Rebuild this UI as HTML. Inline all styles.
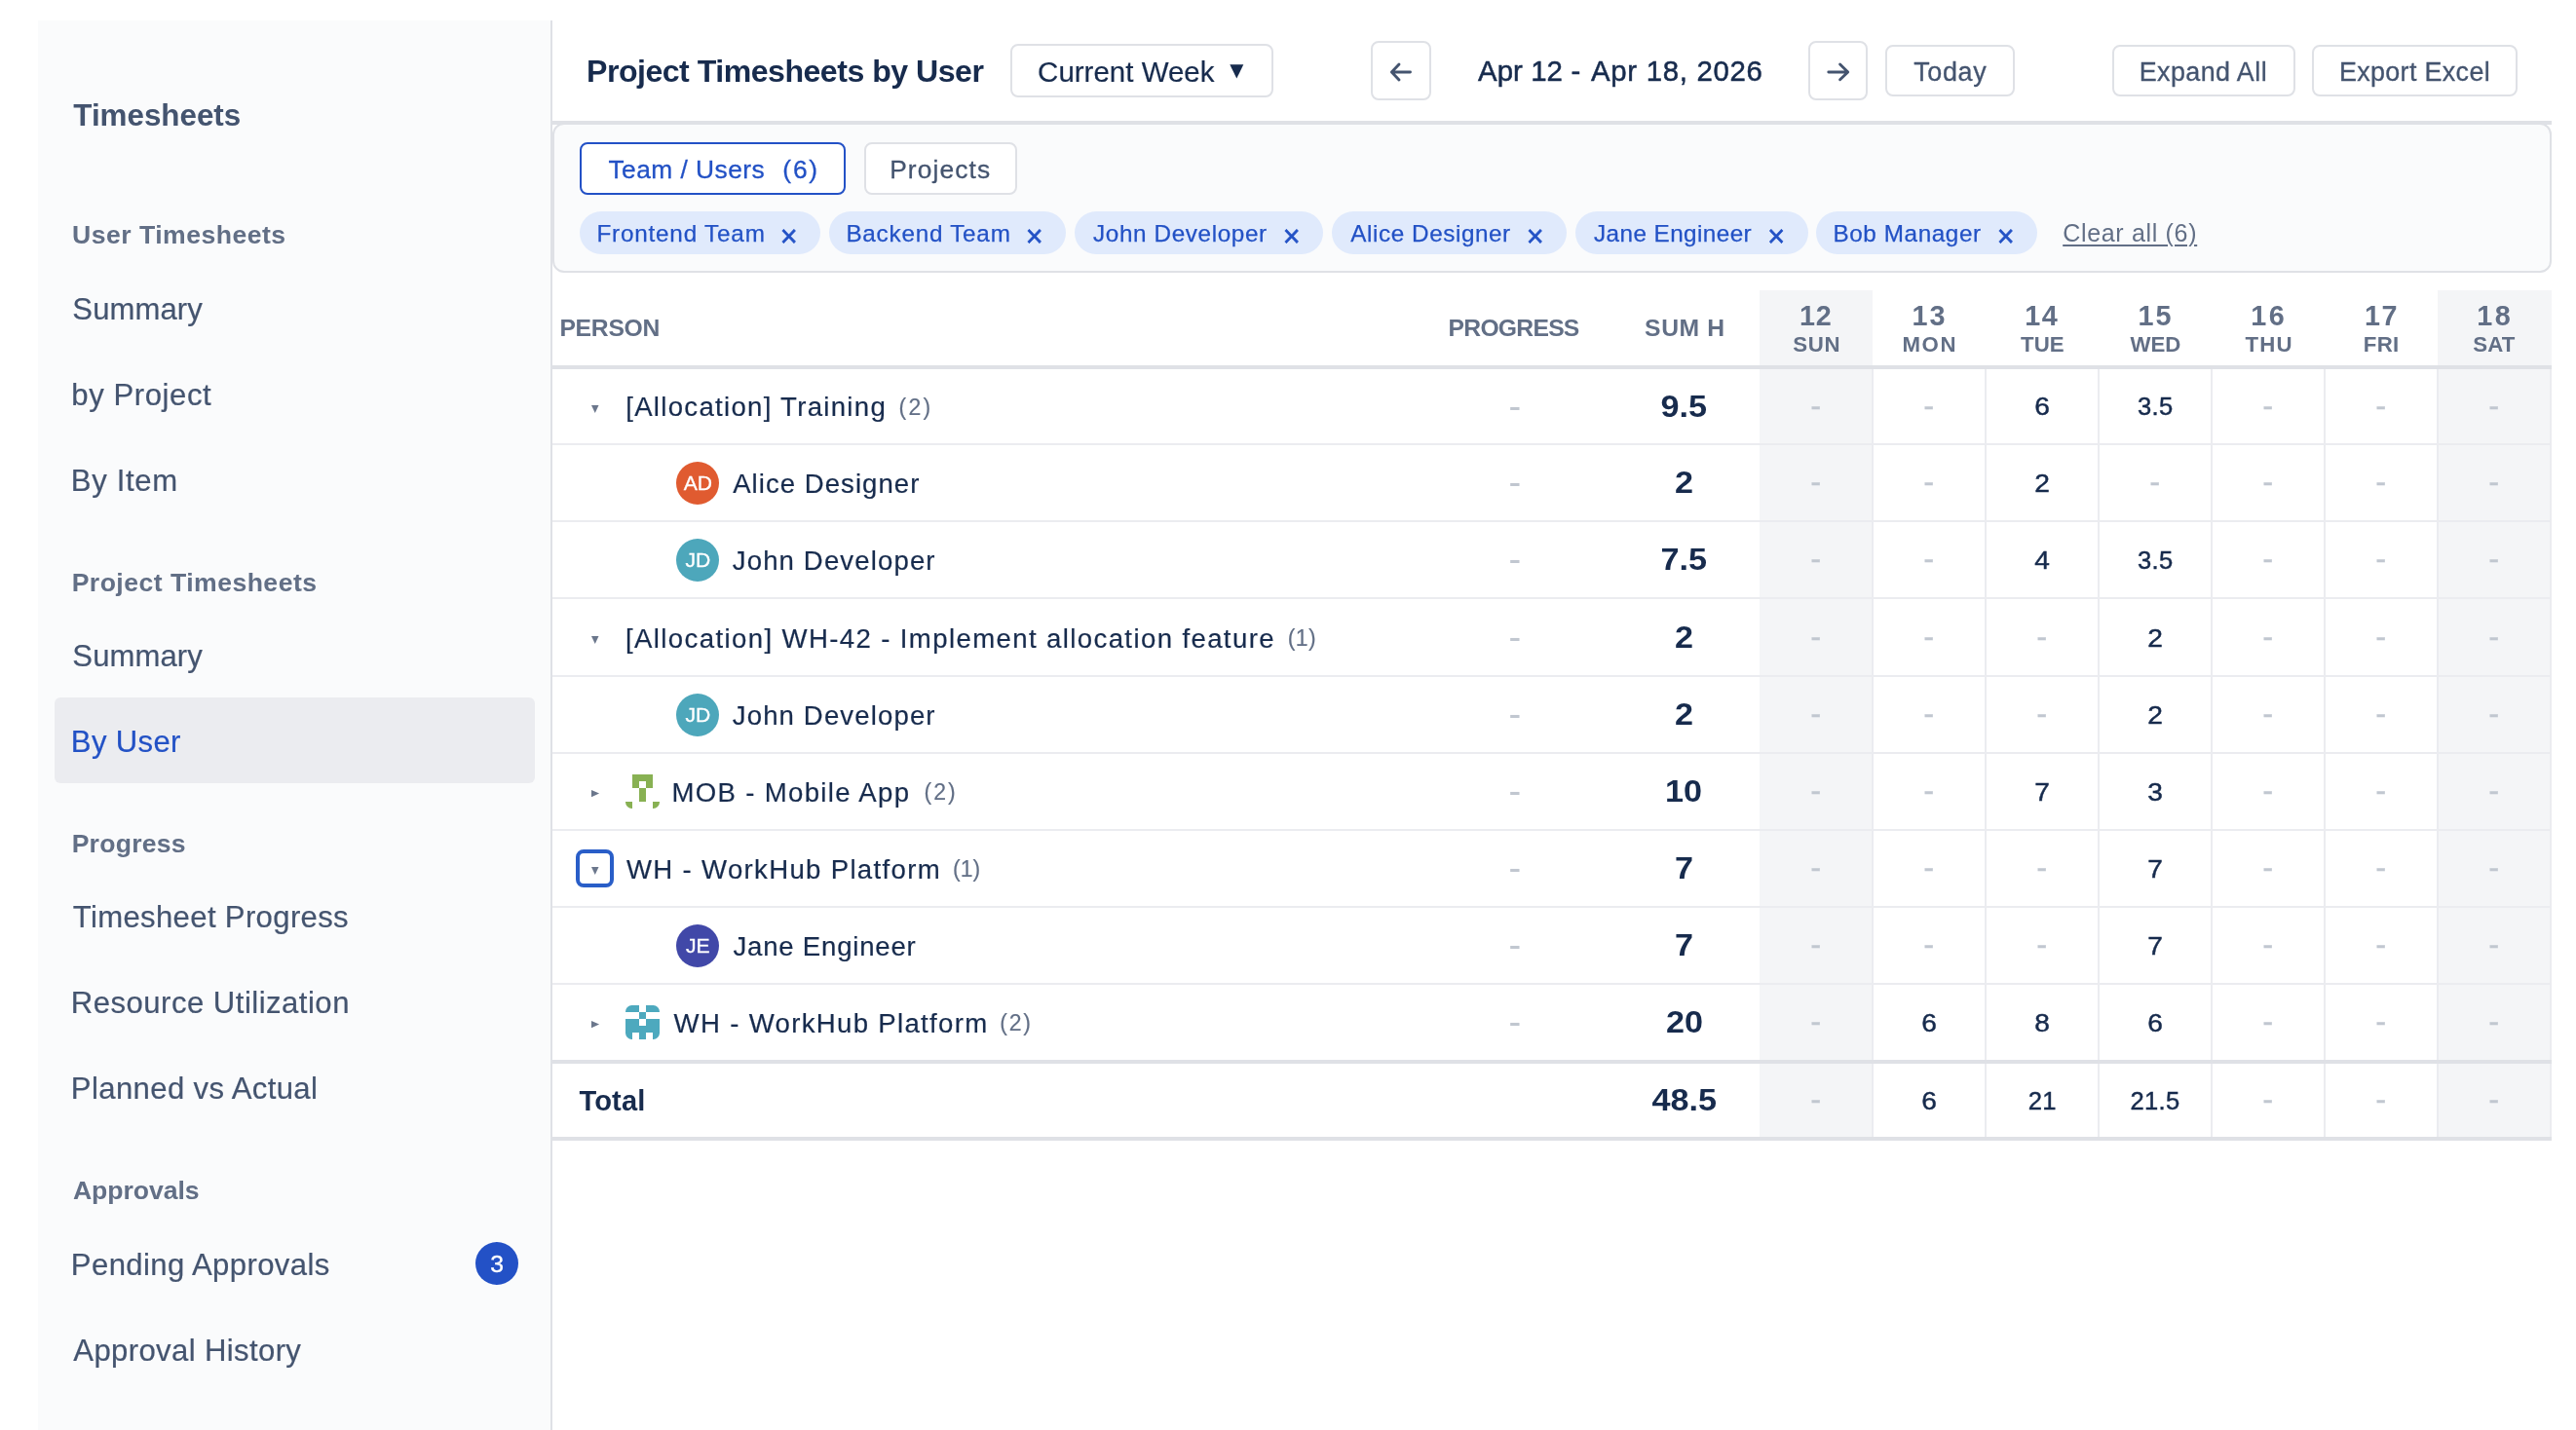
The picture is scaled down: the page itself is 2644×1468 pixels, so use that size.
<!DOCTYPE html>
<html lang="en"><head><meta charset="utf-8"><title>Project Timesheets by User</title>
<style>
*{box-sizing:border-box;margin:0;padding:0}
html,body{width:2644px;height:1468px;background:#fff;overflow:hidden}
body{position:relative;font-family:"Liberation Sans", sans-serif;}
.t{position:absolute;white-space:nowrap;line-height:1;font-family:"Liberation Sans", sans-serif;}
#txt{position:absolute;left:0;top:0;width:2644px;height:1468px;will-change:transform}
.b{position:absolute;}
.btn{position:absolute;border:2px solid #DFE1E6;border-radius:8px;background:#fff;}
.chip{position:absolute;top:217px;height:44px;border-radius:22px;background:#E0EAFC;}
.hl{position:absolute;left:567px;width:2052px;height:2px;background:#EBECF0;}
.vl{position:absolute;top:379px;width:2px;height:790px;background:#EBECF0;}
.av{position:absolute;width:44px;height:44px;border-radius:50%;}
svg{position:absolute;overflow:visible}
</style></head>
<body>
<div class="b" style="left:39px;top:21px;width:528px;height:1447px;background:#FAFBFC;border-right:2px solid #DFE1E6"></div>
<div class="b" style="left:56px;top:716px;width:493px;height:88px;border-radius:6px;background:#EBECF0"></div>
<div class="b" style="left:488px;top:1275px;width:44px;height:44px;border-radius:50%;background:#2351C6"></div>
<div class="b" style="left:567px;top:124px;width:2052px;height:4px;background:#DFE1E6"></div>
<div class="b" style="left:567px;top:126px;width:2052px;height:154px;border:2px solid #DFE1E6;border-radius:12px;background:#FAFBFC"></div>
<div class="btn" style="left:1037px;top:45px;width:270px;height:55px"></div>
<div class="btn" style="left:1407px;top:42px;width:62px;height:61px"></div>
<div class="btn" style="left:1856px;top:42px;width:61px;height:61px"></div>
<div class="btn" style="left:1935px;top:46px;width:133px;height:53px"></div>
<div class="btn" style="left:2168px;top:46px;width:188px;height:53px"></div>
<div class="btn" style="left:2373px;top:46px;width:211px;height:53px"></div>
<svg style="left:1262px;top:66px" width="15" height="15" viewBox="0 0 15 15"><path d="M0.3 0.3 H14.3 L7.3 14.6 Z" fill="#172B4D"/></svg>
<svg style="left:1426px;top:64px" width="24" height="20" viewBox="0 0 24 20" fill="none" stroke="#44546F" stroke-width="2.9" stroke-linecap="round" stroke-linejoin="round"><path d="M21.5 10 H2.6 M10 2 L2.4 10 L10 18"/></svg>
<svg style="left:1875px;top:64px" width="24" height="20" viewBox="0 0 24 20" fill="none" stroke="#44546F" stroke-width="2.9" stroke-linecap="round" stroke-linejoin="round"><path d="M1.8 10 H21.6 M13.6 2 L21.7 10 L13.6 17.8"/></svg>
<div class="btn" style="left:595px;top:146px;width:273px;height:54px;border-color:#2351C6"></div>
<div class="btn" style="left:887px;top:146px;width:157px;height:54px"></div>
<div class="chip" style="left:595px;width:247px"></div>
<div class="chip" style="left:851px;width:243px"></div>
<div class="chip" style="left:1103px;width:255px"></div>
<div class="chip" style="left:1367px;width:241px"></div>
<div class="chip" style="left:1617px;width:238.5px"></div>
<div class="chip" style="left:1864px;width:227px"></div>
<div class="b" style="left:1806px;top:298px;width:116px;height:871px;background:#F4F5F7"></div>
<div class="b" style="left:2502px;top:298px;width:117px;height:871px;background:#F4F5F7"></div>
<div class="vl" style="left:1921px"></div>
<div class="vl" style="left:2037px"></div>
<div class="vl" style="left:2153px"></div>
<div class="vl" style="left:2269px"></div>
<div class="vl" style="left:2385px"></div>
<div class="vl" style="left:2501px"></div>
<div class="vl" style="left:2617px"></div>
<div class="b" style="left:567px;top:375px;width:2052px;height:4px;background:#DFE1E6"></div>
<div class="hl" style="top:455px"></div>
<div class="hl" style="top:534px"></div>
<div class="hl" style="top:613px"></div>
<div class="hl" style="top:693px"></div>
<div class="hl" style="top:772px"></div>
<div class="hl" style="top:851px"></div>
<div class="hl" style="top:930px"></div>
<div class="hl" style="top:1009px"></div>
<div class="b" style="left:567px;top:1088px;width:2052px;height:4px;background:#DFE1E6"></div>
<div class="b" style="left:567px;top:1167px;width:2052px;height:4px;background:#DFE1E6"></div>
<div class="b" style="left:591px;top:872px;width:39px;height:39px;border:4px solid #295EC8;border-radius:8px;background:#fff"></div>
<svg style="left:607.05px;top:416.0px" width="8" height="8" viewBox="0 0 8 8"><path d="M0 0 H7.5 L3.75 7.9 Z" fill="#6B778C"/></svg>
<svg style="left:607.05px;top:653.0px" width="8" height="8" viewBox="0 0 8 8"><path d="M0 0 H7.5 L3.75 7.9 Z" fill="#6B778C"/></svg>
<svg style="left:607.05px;top:890.3000000000001px" width="8" height="8" viewBox="0 0 8 8"><path d="M0 0 H7.5 L3.75 7.9 Z" fill="#6B778C"/></svg>
<svg style="left:607px;top:810.8px" width="9" height="8" viewBox="0 0 9 8"><path d="M0 0 L8.1 3.6 L0 7.2 Z" fill="#6B778C"/></svg>
<svg style="left:607px;top:1047.9px" width="9" height="8" viewBox="0 0 9 8"><path d="M0 0 L8.1 3.6 L0 7.2 Z" fill="#6B778C"/></svg>
<div class="av" style="left:694px;top:474.0px;background:#E05B30"></div>
<div class="av" style="left:694px;top:553.0px;background:#4DA7BB"></div>
<div class="av" style="left:694px;top:712.0px;background:#4DA7BB"></div>
<div class="av" style="left:694px;top:949.0px;background:#4148A8"></div>
<svg style="left:642px;top:795px" width="35" height="35" viewBox="0 0 35 35"><defs><clipPath id="c642795"><rect width="35" height="35" rx="6.5"/></clipPath></defs><g clip-path="url(#c642795)" fill="#88B153" shape-rendering="crispEdges"><rect x="7" y="0" width="7" height="7"/><rect x="14" y="0" width="7" height="7"/><rect x="21" y="0" width="7" height="7"/><rect x="7" y="7" width="7" height="7"/><rect x="21" y="7" width="7" height="7"/><rect x="14" y="14" width="7" height="7"/><rect x="14" y="21" width="7" height="7"/><rect x="0" y="28" width="7" height="7"/><rect x="28" y="28" width="7" height="7"/></g></svg>
<svg style="left:642px;top:1032px" width="35" height="35" viewBox="0 0 35 35"><defs><clipPath id="c6421032"><rect width="35" height="35" rx="6.5"/></clipPath></defs><g clip-path="url(#c6421032)" fill="#4DA9BE" shape-rendering="crispEdges"><rect x="0" y="0" width="7" height="7"/><rect x="7" y="0" width="7" height="7"/><rect x="21" y="0" width="7" height="7"/><rect x="28" y="0" width="7" height="7"/><rect x="14" y="7" width="7" height="7"/><rect x="0" y="14" width="7" height="7"/><rect x="7" y="14" width="7" height="7"/><rect x="21" y="14" width="7" height="7"/><rect x="28" y="14" width="7" height="7"/><rect x="0" y="21" width="7" height="7"/><rect x="7" y="21" width="7" height="7"/><rect x="14" y="21" width="7" height="7"/><rect x="21" y="21" width="7" height="7"/><rect x="28" y="21" width="7" height="7"/><rect x="0" y="28" width="7" height="7"/><rect x="14" y="28" width="7" height="7"/><rect x="28" y="28" width="7" height="7"/></g></svg>
<div id="txt">
<nav class="sidebar">
<span class="t" style="left:75.30px;top:103px;font-size:31.4px;color:#44546F;font-weight:700;letter-spacing:-0.026px;">Timesheets</span>
<span class="t" style="left:74.05px;top:228px;font-size:26.6px;color:#626F86;font-weight:700;letter-spacing:0.472px;">User Timesheets</span>
<span class="t" style="left:73.64px;top:585px;font-size:26.6px;color:#626F86;font-weight:700;letter-spacing:0.470px;">Project Timesheets</span>
<span class="t" style="left:73.64px;top:853px;font-size:26.6px;color:#626F86;font-weight:700;letter-spacing:0.245px;">Progress</span>
<span class="t" style="left:74.88px;top:1209px;font-size:26.6px;color:#626F86;font-weight:700;letter-spacing:-0.035px;">Approvals</span>
<span class="t" style="left:74.33px;top:302px;font-size:31.08px;color:#44546F;letter-spacing:0.084px;-webkit-text-stroke:0.2px #44546F;">Summary</span>
<span class="t" style="left:73.36px;top:390px;font-size:31.08px;color:#44546F;letter-spacing:0.572px;-webkit-text-stroke:0.2px #44546F;">by Project</span>
<span class="t" style="left:72.87px;top:478px;font-size:31.08px;color:#44546F;letter-spacing:0.648px;-webkit-text-stroke:0.2px #44546F;">By Item</span>
<span class="t" style="left:74.33px;top:658px;font-size:31.08px;color:#44546F;letter-spacing:0.084px;-webkit-text-stroke:0.2px #44546F;">Summary</span>
<span class="t" style="left:72.87px;top:746px;font-size:31.08px;color:#2251C5;letter-spacing:0.343px;-webkit-text-stroke:0.2px #2251C5;">By User</span>
<span class="t" style="left:74.81px;top:926px;font-size:31.08px;color:#44546F;letter-spacing:0.348px;-webkit-text-stroke:0.2px #44546F;">Timesheet Progress</span>
<span class="t" style="left:72.87px;top:1014px;font-size:31.08px;color:#44546F;letter-spacing:0.484px;-webkit-text-stroke:0.2px #44546F;">Resource Utilization</span>
<span class="t" style="left:72.87px;top:1102px;font-size:31.08px;color:#44546F;letter-spacing:0.375px;-webkit-text-stroke:0.2px #44546F;">Planned vs Actual</span>
<span class="t" style="left:72.87px;top:1283px;font-size:31.08px;color:#44546F;letter-spacing:0.388px;-webkit-text-stroke:0.2px #44546F;">Pending Approvals</span>
<span class="t" style="left:75.30px;top:1371px;font-size:31.08px;color:#44546F;letter-spacing:0.374px;-webkit-text-stroke:0.2px #44546F;">Approval History</span>
<span class="t" style="left:503.20px;top:1286px;font-size:24.74px;color:#FFFFFF;-webkit-text-stroke:0.3px #FFFFFF;">3</span>
</nav>
<header class="toolbar">
<span class="t" style="left:601.99px;top:57px;font-size:32.12px;color:#172B4D;font-weight:700;letter-spacing:-0.507px;">Project Timesheets by User</span>
<span class="t" style="left:1065.12px;top:59px;font-size:29.48px;color:#172B4D;letter-spacing:0.010px;-webkit-text-stroke:0.2px #172B4D;">Current Week</span>
<span class="t" style="left:1517.00px;top:58px;font-size:29.36px;color:#172B4D;letter-spacing:0.077px;-webkit-text-stroke:0.5px #172B4D;">Apr 12</span>
<span class="t" style="left:1612.48px;top:58px;font-size:29.36px;color:#172B4D;-webkit-text-stroke:0.5px #172B4D;">-</span>
<span class="t" style="left:1633.00px;top:58px;font-size:29.36px;color:#172B4D;letter-spacing:0.696px;-webkit-text-stroke:0.5px #172B4D;">Apr 18, 2026</span>
<span class="t" style="left:1964.28px;top:61px;font-size:26.92px;color:#44546F;letter-spacing:0.646px;-webkit-text-stroke:0.3px #44546F;">Today</span>
<span class="t" style="left:2195.70px;top:61px;font-size:26.92px;color:#44546F;letter-spacing:0.420px;-webkit-text-stroke:0.3px #44546F;">Expand All</span>
<span class="t" style="left:2400.90px;top:61px;font-size:26.92px;color:#44546F;letter-spacing:0.343px;-webkit-text-stroke:0.3px #44546F;">Export Excel</span>
</header>
<section class="filters">
<span class="t" style="left:624.39px;top:161px;font-size:26.34px;color:#2251C5;letter-spacing:0.481px;-webkit-text-stroke:0.3px #2251C5;">Team / Users</span>
<span class="t" style="left:803.37px;top:161px;font-size:26.34px;color:#2251C5;letter-spacing:1.753px;-webkit-text-stroke:0.3px #2251C5;">(6)</span>
<span class="t" style="left:913.14px;top:161px;font-size:26.34px;color:#44546F;letter-spacing:1.133px;-webkit-text-stroke:0.3px #44546F;">Projects</span>
<span class="t" style="left:612.40px;top:228px;font-size:24.27px;color:#2251C5;letter-spacing:0.808px;-webkit-text-stroke:0.25px #2251C5;">Frontend Team</span>
<span class="t" style="left:800.68px;top:227px;font-size:30.5px;color:#2251C5;-webkit-text-stroke:0.6px #2251C5;">×</span>
<span class="t" style="left:868.40px;top:228px;font-size:24.27px;color:#2251C5;letter-spacing:0.762px;-webkit-text-stroke:0.25px #2251C5;">Backend Team</span>
<span class="t" style="left:1052.68px;top:227px;font-size:30.5px;color:#2251C5;-webkit-text-stroke:0.6px #2251C5;">×</span>
<span class="t" style="left:1122.00px;top:228px;font-size:24.27px;color:#2251C5;letter-spacing:0.630px;-webkit-text-stroke:0.25px #2251C5;">John Developer</span>
<span class="t" style="left:1316.68px;top:227px;font-size:30.5px;color:#2251C5;-webkit-text-stroke:0.6px #2251C5;">×</span>
<span class="t" style="left:1386.30px;top:228px;font-size:24.27px;color:#2251C5;letter-spacing:0.570px;-webkit-text-stroke:0.25px #2251C5;">Alice Designer</span>
<span class="t" style="left:1566.68px;top:227px;font-size:30.5px;color:#2251C5;-webkit-text-stroke:0.6px #2251C5;">×</span>
<span class="t" style="left:1636.00px;top:228px;font-size:24.27px;color:#2251C5;letter-spacing:0.431px;-webkit-text-stroke:0.25px #2251C5;">Jane Engineer</span>
<span class="t" style="left:1814.18px;top:227px;font-size:30.5px;color:#2251C5;-webkit-text-stroke:0.6px #2251C5;">×</span>
<span class="t" style="left:1881.40px;top:228px;font-size:24.27px;color:#2251C5;letter-spacing:0.607px;-webkit-text-stroke:0.25px #2251C5;">Bob Manager</span>
<span class="t" style="left:2049.68px;top:227px;font-size:30.5px;color:#2251C5;-webkit-text-stroke:0.6px #2251C5;">×</span>
<span class="t" style="left:2117.20px;top:227px;font-size:25.0px;color:#626F86;letter-spacing:0.677px;text-decoration:underline;text-decoration-thickness:2px;text-underline-offset:3px;">Clear all (6)</span>
</section>
<div class="table-head">
<span class="t" style="left:574.40px;top:325px;font-size:24.71px;color:#626F86;font-weight:700;letter-spacing:-0.261px;">PERSON</span>
<span class="t" style="left:1486.60px;top:325px;font-size:24.71px;color:#626F86;font-weight:700;letter-spacing:-0.753px;">PROGRESS</span>
<span class="t" style="left:1688.10px;top:325px;font-size:24.71px;color:#626F86;font-weight:700;letter-spacing:0.582px;">SUM H</span>
<span class="t" style="left:1847.10px;top:310px;font-size:28.78px;color:#626F86;font-weight:700;letter-spacing:0.704px;">12</span>
<span class="t" style="left:1840.30px;top:343px;font-size:22.24px;color:#626F86;font-weight:700;letter-spacing:0.653px;">SUN</span>
<span class="t" style="left:1962.50px;top:310px;font-size:28.78px;color:#626F86;font-weight:700;letter-spacing:1.904px;">13</span>
<span class="t" style="left:1952.40px;top:343px;font-size:22.24px;color:#626F86;font-weight:700;letter-spacing:1.688px;">MON</span>
<span class="t" style="left:2078.35px;top:310px;font-size:28.78px;color:#626F86;font-weight:700;letter-spacing:1.305px;">14</span>
<span class="t" style="left:2074.00px;top:343px;font-size:22.24px;color:#626F86;font-weight:700;letter-spacing:0.078px;">TUE</span>
<span class="t" style="left:2194.45px;top:310px;font-size:28.78px;color:#626F86;font-weight:700;letter-spacing:2.004px;">15</span>
<span class="t" style="left:2186.60px;top:343px;font-size:22.24px;color:#626F86;font-weight:700;letter-spacing:-0.112px;">WED</span>
<span class="t" style="left:2310.20px;top:310px;font-size:28.78px;color:#626F86;font-weight:700;letter-spacing:2.504px;">16</span>
<span class="t" style="left:2304.45px;top:343px;font-size:22.24px;color:#626F86;font-weight:700;letter-spacing:1.228px;">THU</span>
<span class="t" style="left:2426.95px;top:310px;font-size:28.78px;color:#626F86;font-weight:700;letter-spacing:1.454px;">17</span>
<span class="t" style="left:2425.80px;top:343px;font-size:22.24px;color:#626F86;font-weight:700;letter-spacing:0.328px;">FRI</span>
<span class="t" style="left:2542.20px;top:310px;font-size:28.78px;color:#626F86;font-weight:700;letter-spacing:2.504px;">18</span>
<span class="t" style="left:2538.30px;top:343px;font-size:22.24px;color:#626F86;font-weight:700;letter-spacing:0.079px;">SAT</span>
</div>
<div class="table-body">
<span class="t" style="left:642.18px;top:404px;font-size:27.59px;color:#172B4D;letter-spacing:1.295px;-webkit-text-stroke:0.2px #172B4D;">[Allocation] Training</span>
<span class="t" style="left:922.60px;top:407px;font-size:23px;color:#626F86;letter-spacing:2.225px;-webkit-text-stroke:0.2px #626F86;">(2)</span>
<span class="t" style="left:1548.57px;top:398px;font-size:38px;color:#C1C7D0;">-</span>
<span class="t" style="left:1707.29px;top:402px;font-size:30.52px;color:#172B4D;font-weight:700;transform:scaleX(1.12);">9.5</span>
<span class="t" style="left:1858.29px;top:400px;font-size:33px;color:#C1C7D0;-webkit-text-stroke:0.25px #C1C7D0;">-</span>
<span class="t" style="left:1974.29px;top:400px;font-size:33px;color:#C1C7D0;-webkit-text-stroke:0.25px #C1C7D0;">-</span>
<span class="t" style="left:2088.85px;top:405px;font-size:25.55px;color:#172B4D;letter-spacing:0.300px;-webkit-text-stroke:0.45px #172B4D;transform:scaleX(1.1);">6</span>
<span class="t" style="left:2194.00px;top:405px;font-size:25.55px;color:#172B4D;letter-spacing:0.300px;-webkit-text-stroke:0.45px #172B4D;">3.5</span>
<span class="t" style="left:2322.29px;top:400px;font-size:33px;color:#C1C7D0;-webkit-text-stroke:0.25px #C1C7D0;">-</span>
<span class="t" style="left:2438.29px;top:400px;font-size:33px;color:#C1C7D0;-webkit-text-stroke:0.25px #C1C7D0;">-</span>
<span class="t" style="left:2554.29px;top:400px;font-size:33px;color:#C1C7D0;-webkit-text-stroke:0.25px #C1C7D0;">-</span>
<span class="t" style="left:752.20px;top:483px;font-size:27.59px;color:#172B4D;letter-spacing:1.027px;-webkit-text-stroke:0.2px #172B4D;">Alice Designer</span>
<span class="t" style="left:1548.57px;top:476px;font-size:38px;color:#C1C7D0;">-</span>
<span class="t" style="left:1720.02px;top:480px;font-size:30.52px;color:#172B4D;font-weight:700;transform:scaleX(1.12);">2</span>
<span class="t" style="left:1858.29px;top:478px;font-size:33px;color:#C1C7D0;-webkit-text-stroke:0.25px #C1C7D0;">-</span>
<span class="t" style="left:1974.29px;top:478px;font-size:33px;color:#C1C7D0;-webkit-text-stroke:0.25px #C1C7D0;">-</span>
<span class="t" style="left:2088.90px;top:484px;font-size:25.55px;color:#172B4D;letter-spacing:0.300px;-webkit-text-stroke:0.45px #172B4D;transform:scaleX(1.1);">2</span>
<span class="t" style="left:2206.29px;top:478px;font-size:33px;color:#C1C7D0;-webkit-text-stroke:0.25px #C1C7D0;">-</span>
<span class="t" style="left:2322.29px;top:478px;font-size:33px;color:#C1C7D0;-webkit-text-stroke:0.25px #C1C7D0;">-</span>
<span class="t" style="left:2438.29px;top:478px;font-size:33px;color:#C1C7D0;-webkit-text-stroke:0.25px #C1C7D0;">-</span>
<span class="t" style="left:2554.29px;top:478px;font-size:33px;color:#C1C7D0;-webkit-text-stroke:0.25px #C1C7D0;">-</span>
<span class="t" style="left:751.77px;top:562px;font-size:27.59px;color:#172B4D;letter-spacing:1.124px;-webkit-text-stroke:0.2px #172B4D;">John Developer</span>
<span class="t" style="left:1548.57px;top:555px;font-size:38px;color:#C1C7D0;">-</span>
<span class="t" style="left:1707.29px;top:559px;font-size:30.52px;color:#172B4D;font-weight:700;transform:scaleX(1.12);">7.5</span>
<span class="t" style="left:1858.29px;top:557px;font-size:33px;color:#C1C7D0;-webkit-text-stroke:0.25px #C1C7D0;">-</span>
<span class="t" style="left:1974.29px;top:557px;font-size:33px;color:#C1C7D0;-webkit-text-stroke:0.25px #C1C7D0;">-</span>
<span class="t" style="left:2089.00px;top:563px;font-size:25.55px;color:#172B4D;letter-spacing:0.300px;-webkit-text-stroke:0.45px #172B4D;transform:scaleX(1.1);">4</span>
<span class="t" style="left:2194.00px;top:563px;font-size:25.55px;color:#172B4D;letter-spacing:0.300px;-webkit-text-stroke:0.45px #172B4D;">3.5</span>
<span class="t" style="left:2322.29px;top:557px;font-size:33px;color:#C1C7D0;-webkit-text-stroke:0.25px #C1C7D0;">-</span>
<span class="t" style="left:2438.29px;top:557px;font-size:33px;color:#C1C7D0;-webkit-text-stroke:0.25px #C1C7D0;">-</span>
<span class="t" style="left:2554.29px;top:557px;font-size:33px;color:#C1C7D0;-webkit-text-stroke:0.25px #C1C7D0;">-</span>
<span class="t" style="left:641.98px;top:642px;font-size:27.59px;color:#172B4D;letter-spacing:1.380px;-webkit-text-stroke:0.2px #172B4D;">[Allocation] WH-42 - Implement allocation feature</span>
<span class="t" style="left:1321.80px;top:644px;font-size:23px;color:#626F86;letter-spacing:0.375px;-webkit-text-stroke:0.2px #626F86;">(1)</span>
<span class="t" style="left:1548.57px;top:635px;font-size:38px;color:#C1C7D0;">-</span>
<span class="t" style="left:1720.02px;top:639px;font-size:30.52px;color:#172B4D;font-weight:700;transform:scaleX(1.12);">2</span>
<span class="t" style="left:1858.29px;top:637px;font-size:33px;color:#C1C7D0;-webkit-text-stroke:0.25px #C1C7D0;">-</span>
<span class="t" style="left:1974.29px;top:637px;font-size:33px;color:#C1C7D0;-webkit-text-stroke:0.25px #C1C7D0;">-</span>
<span class="t" style="left:2090.29px;top:637px;font-size:33px;color:#C1C7D0;-webkit-text-stroke:0.25px #C1C7D0;">-</span>
<span class="t" style="left:2204.90px;top:643px;font-size:25.55px;color:#172B4D;letter-spacing:0.300px;-webkit-text-stroke:0.45px #172B4D;transform:scaleX(1.1);">2</span>
<span class="t" style="left:2322.29px;top:637px;font-size:33px;color:#C1C7D0;-webkit-text-stroke:0.25px #C1C7D0;">-</span>
<span class="t" style="left:2438.29px;top:637px;font-size:33px;color:#C1C7D0;-webkit-text-stroke:0.25px #C1C7D0;">-</span>
<span class="t" style="left:2554.29px;top:637px;font-size:33px;color:#C1C7D0;-webkit-text-stroke:0.25px #C1C7D0;">-</span>
<span class="t" style="left:751.77px;top:721px;font-size:27.59px;color:#172B4D;letter-spacing:1.124px;-webkit-text-stroke:0.2px #172B4D;">John Developer</span>
<span class="t" style="left:1548.57px;top:714px;font-size:38px;color:#C1C7D0;">-</span>
<span class="t" style="left:1720.02px;top:718px;font-size:30.52px;color:#172B4D;font-weight:700;transform:scaleX(1.12);">2</span>
<span class="t" style="left:1858.29px;top:716px;font-size:33px;color:#C1C7D0;-webkit-text-stroke:0.25px #C1C7D0;">-</span>
<span class="t" style="left:1974.29px;top:716px;font-size:33px;color:#C1C7D0;-webkit-text-stroke:0.25px #C1C7D0;">-</span>
<span class="t" style="left:2090.29px;top:716px;font-size:33px;color:#C1C7D0;-webkit-text-stroke:0.25px #C1C7D0;">-</span>
<span class="t" style="left:2204.90px;top:722px;font-size:25.55px;color:#172B4D;letter-spacing:0.300px;-webkit-text-stroke:0.45px #172B4D;transform:scaleX(1.1);">2</span>
<span class="t" style="left:2322.29px;top:716px;font-size:33px;color:#C1C7D0;-webkit-text-stroke:0.25px #C1C7D0;">-</span>
<span class="t" style="left:2438.29px;top:716px;font-size:33px;color:#C1C7D0;-webkit-text-stroke:0.25px #C1C7D0;">-</span>
<span class="t" style="left:2554.29px;top:716px;font-size:33px;color:#C1C7D0;-webkit-text-stroke:0.25px #C1C7D0;">-</span>
<span class="t" style="left:689.44px;top:800px;font-size:27.59px;color:#172B4D;letter-spacing:1.325px;-webkit-text-stroke:0.2px #172B4D;">MOB - Mobile App</span>
<span class="t" style="left:948.60px;top:802px;font-size:23px;color:#626F86;letter-spacing:1.975px;-webkit-text-stroke:0.2px #626F86;">(2)</span>
<span class="t" style="left:1548.57px;top:793px;font-size:38px;color:#C1C7D0;">-</span>
<span class="t" style="left:1711.29px;top:797px;font-size:30.52px;color:#172B4D;font-weight:700;transform:scaleX(1.12);">10</span>
<span class="t" style="left:1858.29px;top:795px;font-size:33px;color:#C1C7D0;-webkit-text-stroke:0.25px #C1C7D0;">-</span>
<span class="t" style="left:1974.29px;top:795px;font-size:33px;color:#C1C7D0;-webkit-text-stroke:0.25px #C1C7D0;">-</span>
<span class="t" style="left:2088.85px;top:801px;font-size:25.55px;color:#172B4D;letter-spacing:0.300px;-webkit-text-stroke:0.45px #172B4D;transform:scaleX(1.1);">7</span>
<span class="t" style="left:2205.00px;top:801px;font-size:25.55px;color:#172B4D;letter-spacing:0.300px;-webkit-text-stroke:0.45px #172B4D;transform:scaleX(1.1);">3</span>
<span class="t" style="left:2322.29px;top:795px;font-size:33px;color:#C1C7D0;-webkit-text-stroke:0.25px #C1C7D0;">-</span>
<span class="t" style="left:2438.29px;top:795px;font-size:33px;color:#C1C7D0;-webkit-text-stroke:0.25px #C1C7D0;">-</span>
<span class="t" style="left:2554.29px;top:795px;font-size:33px;color:#C1C7D0;-webkit-text-stroke:0.25px #C1C7D0;">-</span>
<span class="t" style="left:643.00px;top:879px;font-size:27.59px;color:#172B4D;letter-spacing:1.319px;-webkit-text-stroke:0.2px #172B4D;">WH - WorkHub Platform</span>
<span class="t" style="left:977.90px;top:881px;font-size:23px;color:#626F86;letter-spacing:0.125px;-webkit-text-stroke:0.2px #626F86;">(1)</span>
<span class="t" style="left:1548.57px;top:872px;font-size:38px;color:#C1C7D0;">-</span>
<span class="t" style="left:1720.25px;top:876px;font-size:30.52px;color:#172B4D;font-weight:700;transform:scaleX(1.12);">7</span>
<span class="t" style="left:1858.29px;top:874px;font-size:33px;color:#C1C7D0;-webkit-text-stroke:0.25px #C1C7D0;">-</span>
<span class="t" style="left:1974.29px;top:874px;font-size:33px;color:#C1C7D0;-webkit-text-stroke:0.25px #C1C7D0;">-</span>
<span class="t" style="left:2090.29px;top:874px;font-size:33px;color:#C1C7D0;-webkit-text-stroke:0.25px #C1C7D0;">-</span>
<span class="t" style="left:2204.85px;top:880px;font-size:25.55px;color:#172B4D;letter-spacing:0.300px;-webkit-text-stroke:0.45px #172B4D;transform:scaleX(1.1);">7</span>
<span class="t" style="left:2322.29px;top:874px;font-size:33px;color:#C1C7D0;-webkit-text-stroke:0.25px #C1C7D0;">-</span>
<span class="t" style="left:2438.29px;top:874px;font-size:33px;color:#C1C7D0;-webkit-text-stroke:0.25px #C1C7D0;">-</span>
<span class="t" style="left:2554.29px;top:874px;font-size:33px;color:#C1C7D0;-webkit-text-stroke:0.25px #C1C7D0;">-</span>
<span class="t" style="left:752.47px;top:958px;font-size:27.59px;color:#172B4D;letter-spacing:0.786px;-webkit-text-stroke:0.2px #172B4D;">Jane Engineer</span>
<span class="t" style="left:1548.57px;top:951px;font-size:38px;color:#C1C7D0;">-</span>
<span class="t" style="left:1720.25px;top:955px;font-size:30.52px;color:#172B4D;font-weight:700;transform:scaleX(1.12);">7</span>
<span class="t" style="left:1858.29px;top:953px;font-size:33px;color:#C1C7D0;-webkit-text-stroke:0.25px #C1C7D0;">-</span>
<span class="t" style="left:1974.29px;top:953px;font-size:33px;color:#C1C7D0;-webkit-text-stroke:0.25px #C1C7D0;">-</span>
<span class="t" style="left:2090.29px;top:953px;font-size:33px;color:#C1C7D0;-webkit-text-stroke:0.25px #C1C7D0;">-</span>
<span class="t" style="left:2204.85px;top:959px;font-size:25.55px;color:#172B4D;letter-spacing:0.300px;-webkit-text-stroke:0.45px #172B4D;transform:scaleX(1.1);">7</span>
<span class="t" style="left:2322.29px;top:953px;font-size:33px;color:#C1C7D0;-webkit-text-stroke:0.25px #C1C7D0;">-</span>
<span class="t" style="left:2438.29px;top:953px;font-size:33px;color:#C1C7D0;-webkit-text-stroke:0.25px #C1C7D0;">-</span>
<span class="t" style="left:2554.29px;top:953px;font-size:33px;color:#C1C7D0;-webkit-text-stroke:0.25px #C1C7D0;">-</span>
<span class="t" style="left:691.60px;top:1037px;font-size:27.59px;color:#172B4D;letter-spacing:1.319px;-webkit-text-stroke:0.2px #172B4D;">WH - WorkHub Platform</span>
<span class="t" style="left:1026.30px;top:1039px;font-size:23px;color:#626F86;letter-spacing:1.775px;-webkit-text-stroke:0.2px #626F86;">(2)</span>
<span class="t" style="left:1548.57px;top:1030px;font-size:38px;color:#C1C7D0;">-</span>
<span class="t" style="left:1711.77px;top:1034px;font-size:30.52px;color:#172B4D;font-weight:700;transform:scaleX(1.12);">20</span>
<span class="t" style="left:1858.29px;top:1032px;font-size:33px;color:#C1C7D0;-webkit-text-stroke:0.25px #C1C7D0;">-</span>
<span class="t" style="left:1972.85px;top:1038px;font-size:25.55px;color:#172B4D;letter-spacing:0.300px;-webkit-text-stroke:0.45px #172B4D;transform:scaleX(1.1);">6</span>
<span class="t" style="left:2088.90px;top:1038px;font-size:25.55px;color:#172B4D;letter-spacing:0.300px;-webkit-text-stroke:0.45px #172B4D;transform:scaleX(1.1);">8</span>
<span class="t" style="left:2204.85px;top:1038px;font-size:25.55px;color:#172B4D;letter-spacing:0.300px;-webkit-text-stroke:0.45px #172B4D;transform:scaleX(1.1);">6</span>
<span class="t" style="left:2322.29px;top:1032px;font-size:33px;color:#C1C7D0;-webkit-text-stroke:0.25px #C1C7D0;">-</span>
<span class="t" style="left:2438.29px;top:1032px;font-size:33px;color:#C1C7D0;-webkit-text-stroke:0.25px #C1C7D0;">-</span>
<span class="t" style="left:2554.29px;top:1032px;font-size:33px;color:#C1C7D0;-webkit-text-stroke:0.25px #C1C7D0;">-</span>
<span class="t" style="left:594.50px;top:1116px;font-size:29.07px;color:#172B4D;font-weight:700;letter-spacing:0.134px;">Total</span>
<span class="t" style="left:1699.28px;top:1114px;font-size:30.52px;color:#172B4D;font-weight:700;transform:scaleX(1.12);">48.5</span>
<span class="t" style="left:1858.29px;top:1112px;font-size:33px;color:#C1C7D0;-webkit-text-stroke:0.25px #C1C7D0;">-</span>
<span class="t" style="left:1972.85px;top:1118px;font-size:25.55px;color:#172B4D;letter-spacing:0.300px;-webkit-text-stroke:0.45px #172B4D;transform:scaleX(1.1);">6</span>
<span class="t" style="left:2081.65px;top:1118px;font-size:25.55px;color:#172B4D;letter-spacing:0.300px;-webkit-text-stroke:0.45px #172B4D;">21</span>
<span class="t" style="left:2186.59px;top:1118px;font-size:25.55px;color:#172B4D;letter-spacing:0.300px;-webkit-text-stroke:0.45px #172B4D;">21.5</span>
<span class="t" style="left:2322.29px;top:1112px;font-size:33px;color:#C1C7D0;-webkit-text-stroke:0.25px #C1C7D0;">-</span>
<span class="t" style="left:2438.29px;top:1112px;font-size:33px;color:#C1C7D0;-webkit-text-stroke:0.25px #C1C7D0;">-</span>
<span class="t" style="left:2554.29px;top:1112px;font-size:33px;color:#C1C7D0;-webkit-text-stroke:0.25px #C1C7D0;">-</span>
<span class="t" style="left:701.81px;top:485px;font-size:21.1px;color:#FFFFFF;-webkit-text-stroke:0.3px #FFFFFF;">AD</span>
<span class="t" style="left:703.43px;top:564px;font-size:21.1px;color:#FFFFFF;-webkit-text-stroke:0.3px #FFFFFF;">JD</span>
<span class="t" style="left:703.43px;top:723px;font-size:21.1px;color:#FFFFFF;-webkit-text-stroke:0.3px #FFFFFF;">JD</span>
<span class="t" style="left:703.98px;top:960px;font-size:21.1px;color:#FFFFFF;-webkit-text-stroke:0.3px #FFFFFF;">JE</span>
</div>
</div>
</body></html>
